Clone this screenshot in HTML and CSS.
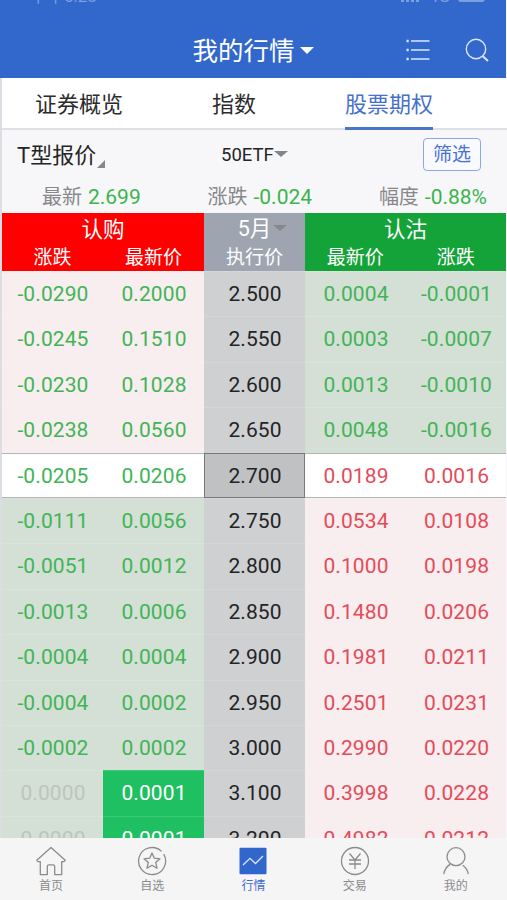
FILE: index.html
```html
<!DOCTYPE html>
<html lang="zh-CN">

<head>
    <meta charset="UTF-8">
    <title>我的行情</title>
    <link rel="stylesheet" href="styles.css">
</head>

<body>
    <div class="app">
        <header class="header">
            <div class="status-bar">
                <span class="clock">下午5:28</span>
                <div class="status-icons">
                    <span class="signal"></span>
                    <span>4G</span>
                    <span class="battery"></span>
                </div>
            </div>
            <div class="title-bar">
                <div class="title">我的行情<span class="caret"></span></div>
                <div class="actions">
                    <svg width="24" height="24" viewBox="0 0 24 24" fill="none" stroke="currentColor" stroke-width="1.4">
                        <path d="M5 3H23.500M5 12H23.500M5 21H23.500" />
                        <path d="M0.500 3h2.200M0.500 12h2.200M0.500 21h2.200" stroke-width="2.400" />
                    </svg>
                    <svg width="24" height="24" viewBox="0 0 24 24" fill="none" stroke="currentColor" stroke-width="1.400">
                        <circle cx="11" cy="11" r="9.700" />
                        <path d="M17.500 18L23 23" stroke-width="2" />
                    </svg>
                </div>
            </div>
        </header>

        <nav class="tabs">
            <div class="tab tab-overview">证券概览</div>
            <div class="tab tab-index">指数</div>
            <div class="tab tab-option active">股票期权</div>
        </nav>

        <section class="filter">
            <div class="filter-type">T型报价<span class="corner"></span></div>
            <div class="filter-etf">50ETF<span class="caret"></span></div>
            <button class="filter-btn">筛选</button>
        </section>

        <section class="summary">
            <div>最新 <b>2.699</b></div>
            <div>涨跌 <b>-0.024</b></div>
            <div>幅度 <b>-0.88%</b></div>
        </section>

        <section class="table-head">
            <div class="head-call">
                <h3>认购</h3>
                <div class="sub"><span>涨跌</span><span>最新价</span></div>
            </div>
            <div class="head-strike">
                <h3>5月<span class="caret"></span></h3>
                <div class="sub"><span>执行价</span></div>
            </div>
            <div class="head-put">
                <h3>认沽</h3>
                <div class="sub"><span>最新价</span><span>涨跌</span></div>
            </div>
        </section>

        <main class="quotes">
            <div class="row upper"><span>-0.0290</span><span>0.2000</span><span>2.500</span><span>0.0004</span><span>-0.0001</span></div>
            <div class="row upper"><span>-0.0245</span><span>0.1510</span><span>2.550</span><span>0.0003</span><span>-0.0007</span></div>
            <div class="row upper"><span>-0.0230</span><span>0.1028</span><span>2.600</span><span>0.0013</span><span>-0.0010</span></div>
            <div class="row upper"><span>-0.0238</span><span>0.0560</span><span>2.650</span><span>0.0048</span><span>-0.0016</span></div>
            <div class="row current"><span>-0.0205</span><span>0.0206</span><span>2.700</span><span>0.0189</span><span>0.0016</span></div>
            <div class="row lower"><span>-0.0111</span><span>0.0056</span><span>2.750</span><span>0.0534</span><span>0.0108</span></div>
            <div class="row lower"><span>-0.0051</span><span>0.0012</span><span>2.800</span><span>0.1000</span><span>0.0198</span></div>
            <div class="row lower"><span>-0.0013</span><span>0.0006</span><span>2.850</span><span>0.1480</span><span>0.0206</span></div>
            <div class="row lower"><span>-0.0004</span><span>0.0004</span><span>2.900</span><span>0.1981</span><span>0.0211</span></div>
            <div class="row lower"><span>-0.0004</span><span>0.0002</span><span>2.950</span><span>0.2501</span><span>0.0231</span></div>
            <div class="row lower"><span>-0.0002</span><span>0.0002</span><span>3.000</span><span>0.2990</span><span>0.0220</span></div>
            <div class="row lower"><span class="flat">0.0000</span><span class="flash">0.0001</span><span>3.100</span><span>0.3998</span><span>0.0228</span></div>
            <div class="row lower"><span class="flat">0.0000</span><span class="flash">0.0001</span><span>3.200</span><span>0.4982</span><span>0.0212</span></div>
        </main>

        <footer class="bottom-nav">
            <div class="nav-item">
                <svg width="32" height="30" viewBox="0 0 32 30" fill="none" stroke="currentColor" stroke-width="1.300" stroke-linejoin="round">
                    <path d="M16 1.500L1.800 14.300L3 15.600H5.300V28.600H12.300V20.500Q12.300 18.800 14 18.800H18Q19.700 18.800 19.700 20.500V28.600H26.700V15.600H29L30.200 14.300Z" />
                </svg>
                <span>首页</span>
            </div>
            <div class="nav-item">
                <svg width="32" height="30" viewBox="0 0 32 30" fill="none" stroke="currentColor" stroke-width="1.300" stroke-linejoin="round">
                    <path d="M27.700 8.200A13.500 13.500 0 1 1 25.500 5.400" />
                    <path d="M16 7L18.300 12.200L24 12.800L19.700 16.600L21 22.200L16 19.300L11 22.200L12.300 16.600L8 12.800L13.700 12.200Z" />
                </svg>
                <span>自选</span>
            </div>
            <div class="nav-item active">
                <svg width="32" height="30" viewBox="0 0 32 30" fill="none">
                    <rect x="2.500" y="1.700" width="27" height="26.500" rx="1" fill="#3166cc" />
                    <path d="M6 19L13 12.300L18.500 17.500L26 10" stroke="#dce8ff" stroke-width="1.300" />
                </svg>
                <span>行情</span>
            </div>
            <div class="nav-item">
                <svg width="32" height="30" viewBox="0 0 32 30" fill="none" stroke="currentColor" stroke-width="1.300">
                    <circle cx="16" cy="15" r="13.500" />
                    <path d="M10.500 7.500L16 14L21.500 7.500M10 14H22M10 18H22M16 14V23" />
                </svg>
                <span>交易</span>
            </div>
            <div class="nav-item">
                <svg width="32" height="30" viewBox="0 0 32 30" fill="none" stroke="currentColor" stroke-width="1.300">
                    <circle cx="16" cy="10.700" r="9" />
                    <path d="M3.800 28.200C4.400 23.800 6.800 20.400 10.300 18.100M22.800 19.300C25.800 21.500 27.700 24.500 28.300 28.200" />
                </svg>
                <span>我的</span>
            </div>
        </footer>
    </div>
</body>

</html>
```

FILE: styles.css
```css
* {
    box-sizing: border-box;
}

body {
    margin: 0;
    font-family: Roboto, "Noto Sans CJK SC", sans-serif;
    background-color: #f7f7f9;
}

.app {
    width: 507px;
    height: 900px;
    display: flex;
    flex-direction: column;
    overflow: hidden;
    background: linear-gradient(90deg, #dcdde3 2px, #f7f7f9 2px);
}

.header {
    height: 78px;
    margin-right: 1px;
    background-color: #3267cc;
    color: #fff;
    flex-shrink: 0;
}

.status-bar {
    height: 24px;
    display: flex;
    justify-content: space-between;
    padding: 0 21px 0 30px;
    font-size: 17px;
    line-height: 20px;
    color: #7c9fe0;
    overflow: hidden;
}

.clock,
.status-icons {
    margin-top: -14px;
}

.status-icons {
    display: flex;
    gap: 8px;
}

.signal {
    width: 20px;
    height: 16px;
    background: repeating-linear-gradient(90deg, #7c9fe0 0 3px, transparent 3px 5px);
}

.battery {
    width: 27px;
    height: 16px;
    border: 2px solid #7c9fe0;
    border-radius: 3px;
}

.title-bar {
    height: 50px;
    display: grid;
    grid-template-columns: 1fr auto 1fr;
    align-items: center;
}

.title {
    grid-column: 2;
    display: flex;
    align-items: center;
    gap: 5px;
    padding-top: 2px;
    font-size: 25.5px;
    line-height: 50px;
}

.caret {
    display: inline-block;
    border: 7px solid transparent;
    border-top-color: currentColor;
    border-bottom: none;
}

.title .caret {
    margin-bottom: 2px;
}

.actions {
    display: flex;
    justify-content: flex-end;
    gap: 35px;
    padding-right: 17px;
    color: #dbe7ff;
}

.tabs {
    height: 52px;
    display: flex;
    flex-shrink: 0;
    margin-left: 2px;
    background-color: #fff;
    border-bottom: 2px solid #dfe0e5;
    font-size: 22px;
    line-height: 54px;
    color: #2b2b2b;
}

.tab-overview {
    margin-left: 33px;
}

.tab-index {
    margin-left: 89px;
}

.tab-option {
    margin-left: 89px;
}

.tab.active {
    height: 52px;
    color: #4570cc;
    border-bottom: 3px solid #4a76c8;
}

.filter {
    height: 49px;
    display: flex;
    align-items: center;
    flex-shrink: 0;
    padding-left: 17px;
    color: #252527;
}

.filter-type {
    display: flex;
    align-items: flex-end;
    width: 204px;
    padding-top: 2px;
    font-size: 22px;
    line-height: 32px;
}

.corner {
    border: 4px solid #88888a;
    border-top-color: transparent;
    border-left-color: transparent;
    margin: 0 0 4px 1px;
}

.filter-etf {
    display: flex;
    align-items: center;
    width: 202px;
    font-size: 18.5px;
}

.filter-etf .caret {
    color: #858587;
    border-top-width: 6px;
    margin-bottom: 2px;
}

.filter-btn {
    width: 58px;
    height: 33px;
    padding: 0;
    border: 1px solid #8ea6e6;
    border-radius: 4px;
    background-color: #f9faff;
    color: #4773d4;
    font-family: inherit;
    font-size: 19px;
    line-height: 31px;
}

.summary {
    height: 34px;
    display: flex;
    justify-content: space-between;
    flex-shrink: 0;
    padding: 1px 20px 0 42px;
    font-size: 20px;
    line-height: 34px;
    color: #88888a;
}

.summary b {
    margin-left: 1px;
    font-weight: normal;
    font-size: 21px;
    color: #39b54c;
}

.table-head {
    height: 58px;
    display: grid;
    grid-template-columns: 202px 101px 201px;
    flex-shrink: 0;
    margin-left: 2px;
    color: #fff;
    text-align: center;
}

.table-head h3 {
    margin: 0;
    font-weight: normal;
    font-size: 21.5px;
    line-height: 33px;
    height: 31px;
}

.sub {
    display: flex;
    font-size: 19px;
    line-height: 28px;
}

.sub span {
    flex: 1;
}

.head-call {
    background-color: #fe0000;
}

.head-strike {
    background-color: #9ea5b0;
}

.head-strike h3 {
    display: flex;
    align-items: center;
    justify-content: center;
    gap: 2px;
    padding-left: 16px;
}

.head-strike .caret {
    color: #85898f;
    border-top-width: 6px;
    margin-bottom: 2px;
}

.head-put {
    background-color: #14a338;
}

.quotes {
    height: 566.500px;
    flex-shrink: 0;
    margin: 0 1px 0 2px;
    overflow: hidden;
    font-size: 21px;
    letter-spacing: 0.1px;
}

.row {
    height: 45.420px;
    display: grid;
    grid-template-columns: 101px 101px 101px 101px 100px;
    grid-template-rows: 100%;
    text-align: center;
    color: #40b556;
}

.row span {
    border-top: 1px solid rgba(255, 255, 255, 0.14);
    padding-left: 1px;
    line-height: 45px;
}

.row span:nth-child(3) {
    background-color: #cfd0d2;
    color: #242426;
}

.upper {
    background: linear-gradient(90deg, #f8edef 50%, #d4dfd5 50%);
}

.lower {
    background: linear-gradient(90deg, #d4dfd5 50%, #f8edef 50%);
}

.current {
    background-color: #fff;
}

.current span {
    border-top: 1px solid #b3b6b7;
    border-bottom: 1px solid #b3b6b7;
}

.current span:nth-child(3) {
    background-color: #c0c1c3;
    border: 1px solid #77787a;
}

.current span:nth-child(n+4),
.lower span:nth-child(n+4) {
    color: #e44b58;
}

.row .flat {
    color: #bdc5c0;
}

.row .flash {
    background-color: #1fc061;
    color: #fff;
}

.bottom-nav {
    flex: 1;
    display: grid;
    grid-template-columns: repeat(5, 101.200px);
    background-color: #f5f5f6;
}

.nav-item {
    display: flex;
    flex-direction: column;
    align-items: center;
    padding-top: 8px;
    padding-left: 1px;
    font-size: 12px;
    line-height: 20px;
    color: #8b8b8d;
}

.nav-item svg {
    flex-shrink: 0;
}

.nav-item.active {
    color: #3d6bce;
}
```
